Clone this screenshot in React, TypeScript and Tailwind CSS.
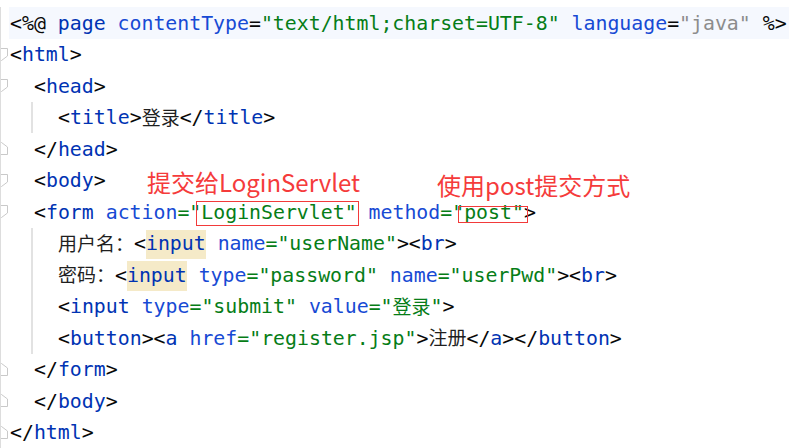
import React from 'react';

type Kind = 'p' | 't' | 'a' | 's' | 'g' | 'c' | 'cs';

interface Tok {
  t: string;
  k: Kind;
  box?: 'login' | 'post';
  mark?: boolean;
}

interface Row {
  fold?: 'open' | 'close';
  level: 0 | 1 | 2;
  guide?: boolean;
  caret?: boolean;
  tokens: Tok[];
}

const kindClass: Record<Kind, string> = {
  p: 'text-[#080808]',
  t: 'text-[#0033b3]',
  a: 'text-[#174ad4]',
  s: 'text-[#067d17]',
  g: 'text-[#8c8c8c]',
  c: 'text-[#1f1f1f] text-[19px]',
  cs: 'text-[#067d17] text-[19px]',
};

const p = (t: string): Tok => ({ t, k: 'p' });
const tg = (t: string): Tok => ({ t, k: 't' });
const at = (t: string): Tok => ({ t, k: 'a' });
const st = (t: string): Tok => ({ t, k: 's' });

const rows: Row[] = [
  {
    level: 0,
    caret: true,
    tokens: [
      p('<%@ '),
      tg('page '),
      at('contentType'),
      p('='),
      st('"text/html;charset=UTF-8" '),
      at('language'),
      p('='),
      { t: '"java" ', k: 'g' },
      p('%>'),
    ],
  },
  { fold: 'open', level: 0, tokens: [p('<'), tg('html'), p('>')] },
  { fold: 'open', level: 1, tokens: [p('<'), tg('head'), p('>')] },
  {
    level: 2,
    guide: true,
    tokens: [p('<'), tg('title'), p('>'), { t: '登录', k: 'c' }, p('</'), tg('title'), p('>')],
  },
  { fold: 'close', level: 1, tokens: [p('</'), tg('head'), p('>')] },
  { fold: 'open', level: 1, tokens: [p('<'), tg('body'), p('>')] },
  {
    fold: 'open',
    level: 1,
    tokens: [
      p('<'),
      tg('form '),
      at('action'),
      st('="'),
      { t: 'LoginServlet"', k: 's', box: 'login' },
      at(' method'),
      st('="'),
      { t: 'post"', k: 's', box: 'post' },
      p('>'),
    ],
  },
  {
    level: 2,
    guide: true,
    tokens: [
      { t: '用户名：', k: 'c' },
      p('<'),
      { t: 'input', k: 't', mark: true },
      at(' name'),
      st('="userName"'),
      p('><'),
      tg('br'),
      p('>'),
    ],
  },
  {
    level: 2,
    guide: true,
    tokens: [
      { t: '密码：', k: 'c' },
      p('<'),
      { t: 'input', k: 't', mark: true },
      at(' type'),
      st('="password" '),
      at('name'),
      st('="userPwd"'),
      p('><'),
      tg('br'),
      p('>'),
    ],
  },
  {
    level: 2,
    guide: true,
    tokens: [
      p('<'),
      tg('input '),
      at('type'),
      st('="submit" '),
      at('value'),
      st('="'),
      { t: '登录', k: 'cs' },
      st('"'),
      p('>'),
    ],
  },
  {
    level: 2,
    guide: true,
    tokens: [
      p('<'),
      tg('button'),
      p('><'),
      tg('a '),
      at('href'),
      st('="register.jsp"'),
      p('>'),
      { t: '注册', k: 'c' },
      p('</'),
      tg('a'),
      p('></'),
      tg('button'),
      p('>'),
    ],
  },
  { fold: 'close', level: 1, tokens: [p('</'), tg('form'), p('>')] },
  { fold: 'close', level: 1, tokens: [p('</'), tg('body'), p('>')] },
  { fold: 'close', level: 0, tokens: [p('</'), tg('html'), p('>')] },
];

function FoldMark({ kind }: { kind: 'open' | 'close' }) {
  const pts =
    kind === 'open' ? '-5,0.5 6.5,0.5 6.5,8 0.5,12.5 -5,8' : '-5,12.5 6.5,12.5 6.5,5 0.5,0.5 -5,5';
  return (
    <svg width="8" height="13" viewBox="0 0 8 13" className="bg-white">
      <polygon points={pts} fill="white" stroke="#c9c9c9" strokeWidth="1" />
    </svg>
  );
}

function Token({ tok }: { tok: Tok }) {
  const cls = kindClass[tok.k];
  if (tok.mark) {
    return <span className={`${cls} self-stretch flex items-center bg-[#f5eac8]`}>{tok.t}</span>;
  }
  if (tok.box === 'login') {
    return (
      <span className={`${cls} relative`}>
        {tok.t}
        <span className="absolute left-[-5px] right-[-2px] top-[-2px] bottom-[-3px] border border-[#f23a3a]" />
      </span>
    );
  }
  if (tok.box === 'post') {
    return (
      <span className={`${cls} relative`}>
        {tok.t}
        <span className="absolute left-[-6px] right-[-4px] top-[3px] bottom-[0px] border border-[#f23a3a]" />
      </span>
    );
  }
  return <span className={cls}>{tok.t}</span>;
}

function Indent({ level, guide }: { level: number; guide?: boolean }) {
  if (level === 0) return null;
  if (level === 1) return <div className="w-[24px] shrink-0" />;
  if (guide)
    return (
      <div className="flex shrink-0">
        <div className="w-[21px]" />
        <div className="w-[27px] border-l-2 border-[#e2e2e2]" />
      </div>
    );
  return <div className="w-[48px] shrink-0" />;
}

export default function App() {
  return (
    <div className="w-[808px] h-[448px] overflow-hidden bg-white pt-[7px] font-['DejaVu_Sans_Mono','Noto_Sans_CJK_SC',monospace] text-[19.85px] leading-none">
      {rows.map((row, i) => (
        <div key={i} className="relative flex h-[31.5px]">
          <div className="w-[9px] shrink-0 border-l border-[#dddddd] flex items-center">
            {row.fold && <FoldMark kind={row.fold} />}
          </div>
          <div className={`flex pl-[1px] ${row.caret ? 'w-[780px] bg-[#f5f8fe]' : 'flex-1'}`}>
            <Indent level={row.level} guide={row.guide} />
            <div className="flex items-center whitespace-pre pt-[2px]">
              {row.tokens.map((tok, j) => (
                <Token key={j} tok={tok} />
              ))}
            </div>
          </div>
          {i === 5 && (
            <>
              <span className="absolute left-[147px] top-[5px] font-['Noto_Sans_CJK_SC',sans-serif] text-[24px] leading-[24px] text-[#f53b3b] whitespace-pre">
                提交给LoginServlet
              </span>
              <span className="absolute left-[437px] top-[8px] font-['Noto_Sans_CJK_SC',sans-serif] text-[24px] leading-[24px] text-[#f53b3b] whitespace-pre">
                使用post提交方式
              </span>
            </>
          )}
        </div>
      ))}
    </div>
  );
}
